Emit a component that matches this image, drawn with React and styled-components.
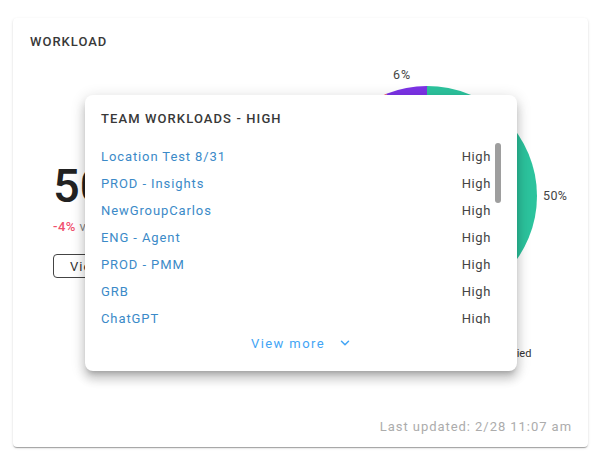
import React from "react";
import styled, { createGlobalStyle } from "styled-components";

const GlobalStyle = createGlobalStyle`
  html, body {
    margin: 0;
    padding: 0;
    background: #ffffff;
  }
  body {
    font-family: Roboto, "Liberation Sans", Arial, sans-serif;
    color: #333;
  }
`;

const Page = styled.div`
  padding: 18px 14px 20px 13px;
`;

const Card = styled.section`
  position: relative;
  box-sizing: border-box;
  width: 575px;
  height: 429px;
  padding: 16px 16px 12px 17px;
  background: #fff;
  border-radius: 4px;
  box-shadow: 0px 2px 1px -1px rgba(0, 0, 0, 0.2),
    0px 1px 1px 0px rgba(0, 0, 0, 0.14), 0px 1px 3px 0px rgba(0, 0, 0, 0.12);
  display: flex;
  flex-direction: column;
`;

const Title = styled.h2`
  margin: 0;
  font-size: 13px;
  line-height: 16px;
  font-weight: 500;
  letter-spacing: 1px;
  color: #383838;
`;

const Main = styled.div`
  display: flex;
  margin-top: 12px;
`;

const StatColumn = styled.div`
  width: 270px;
  padding: 97px 0 0 23px;
  box-sizing: border-box;
  display: flex;
  flex-direction: column;
  align-items: flex-start;
`;

const BigNumber = styled.div`
  font-size: 47px;
  line-height: 54px;
  font-weight: 500;
  color: #222;
`;

const Delta = styled.div`
  margin-top: 6px;
  font-size: 13px;
  line-height: 16px;
  color: #888;
  letter-spacing: 0.5px;

  strong {
    color: #f0506e;
    font-weight: 500;
  }
`;

const OutlineButton = styled.button`
  margin-top: 19px;
  height: 24px;
  padding: 0 16px;
  font-family: inherit;
  font-size: 13px;
  letter-spacing: 1px;
  color: #333;
  background: #fff;
  border: 1px solid #444;
  border-radius: 4px;
`;

const ChartColumn = styled.div`
  flex: 1;
  display: flex;
  flex-direction: column;
  align-items: flex-start;
`;

const Legend = styled.div`
  display: flex;
  gap: 10px;
  margin: 6px 0 0 51px;
  font-size: 11px;
  line-height: 12px;
  color: #333;
`;

const LegendItem = styled.span`
  display: inline-flex;
  align-items: center;
  gap: 4px;

  &::before {
    content: "";
    width: 8px;
    height: 8px;
    border-radius: 50%;
    background: ${({ color }) => color};
  }
`;

const Footer = styled.div`
  margin-top: auto;
  text-align: right;
  font-size: 13px;
  line-height: 16px;
  letter-spacing: 0.95px;
  color: #acacac;
`;

const Popover = styled.div`
  position: absolute;
  left: 72px;
  top: 77px;
  width: 432px;
  height: 276px;
  box-sizing: border-box;
  padding: 16px 16px 17px 16px;
  background: #fff;
  border-radius: 8px;
  box-shadow: 0px 5px 5px -3px rgba(0, 0, 0, 0.2),
    0px 8px 10px 1px rgba(0, 0, 0, 0.14), 0px 3px 14px 2px rgba(0, 0, 0, 0.12);
  display: flex;
  flex-direction: column;
`;

const PopTitle = styled.h3`
  margin: 0;
  font-size: 13px;
  line-height: 16px;
  font-weight: 500;
  letter-spacing: 1.1px;
  color: #383838;
`;

const ListFrame = styled.div`
  position: relative;
  margin-top: 16px;
  height: 181px;
  overflow: hidden;
`;

const List = styled.ul`
  list-style: none;
  margin: 0;
  padding: 0;
`;

const ScrollThumb = styled.div`
  position: absolute;
  top: 0;
  right: 0;
  width: 6px;
  height: 60px;
  border-radius: 3px;
  background: #9e9e9e;
`;

const Row = styled.li`
  display: flex;
  justify-content: space-between;
  align-items: center;
  height: 27px;
  padding-right: 10px;
  font-size: 13px;
`;

const TeamLink = styled.a`
  color: #3b8ac8;
  text-decoration: none;
  letter-spacing: 0.9px;
`;

const Level = styled.span`
  color: #444;
  letter-spacing: 0.6px;
`;

const ViewMore = styled.button`
  align-self: center;
  margin-top: 8px;
  height: 22px;
  display: inline-flex;
  align-items: center;
  gap: 14px;
  padding: 0;
  border: none;
  background: none;
  font-family: inherit;
  font-size: 13px;
  letter-spacing: 1.4px;
  color: #42a5f5;
`;

const teams = [
  "Location Test 8/31",
  "PROD - Insights",
  "NewGroupCarlos",
  "ENG - Agent",
  "PROD - PMM",
  "GRB",
  "ChatGPT",
  "Support - Tier 1",
  "Sales - EMEA",
  "ENG - Platform",
  "Marketing Ops",
  "PROD - Mobile",
  "Finance",
  "ENG - Data",
  "Customer Success",
  "Design",
  "Legal",
  "HR - Recruiting",
  "IT Helpdesk",
  "Partnerships",
];

const slices = [
  { value: 50, color: "#2cc39d" },
  { value: 44, color: "#f0506e" },
  { value: 6, color: "#7c33e6" },
];

const cx = 127;
const cy = 134;
const r = 110;

function arcPath(start, end) {
  const a0 = (start / 100) * 2 * Math.PI;
  const a1 = (end / 100) * 2 * Math.PI;
  const x0 = cx + r * Math.sin(a0);
  const y0 = cy - r * Math.cos(a0);
  const x1 = cx + r * Math.sin(a1);
  const y1 = cy - r * Math.cos(a1);
  const large = end - start > 50 ? 1 : 0;
  return `M${cx},${cy} L${x0},${y0} A${r},${r} 0 ${large} 1 ${x1},${y1} Z`;
}

const PieChart = () => {
  let acc = 0;
  return (
    <svg width="272" height="280" viewBox="0 0 272 280">
      {slices.map((s, i) => {
        const d = arcPath(acc, acc + s.value);
        acc += s.value;
        return <path key={i} d={d} fill={s.color} />;
      })}
      <text x="102" y="17" textAnchor="middle" fontSize="12.5" letterSpacing="0.8" fill="#444" fontFamily="Roboto, sans-serif">
        6%
      </text>
      <text x="243" y="138" fontSize="12.5" letterSpacing="0.4" fill="#444" fontFamily="Roboto, sans-serif">
        50%
      </text>
    </svg>
  );
};

const Chevron = () => (
  <svg width="12" height="12" viewBox="0 0 24 24">
    <path d="M5 8.5l7 7 7-7" fill="none" stroke="#42a5f5" strokeWidth="3" strokeLinecap="round" strokeLinejoin="round" />
  </svg>
);

export default function App() {
  return (
    <>
      <GlobalStyle />
      <Page>
        <Card>
          <Title>WORKLOAD</Title>
          <Main>
            <StatColumn>
              <BigNumber>50</BigNumber>
              <Delta>
                <strong>-4%</strong> vs last week
              </Delta>
              <OutlineButton>View details</OutlineButton>
            </StatColumn>
            <ChartColumn>
              <PieChart />
              <Legend>
                <LegendItem color="#f0506e">Overloaded</LegendItem>
                <LegendItem color="#7c33e6">High</LegendItem>
                <LegendItem color="#2cc39d">Occupied</LegendItem>
              </Legend>
            </ChartColumn>
          </Main>
          <Footer>Last updated: 2/28 11:07 am</Footer>
          <Popover>
            <PopTitle>TEAM WORKLOADS - HIGH</PopTitle>
            <ListFrame>
              <List>
                {teams.map((t) => (
                  <Row key={t}>
                    <TeamLink href="#">{t}</TeamLink>
                    <Level>High</Level>
                  </Row>
                ))}
              </List>
              <ScrollThumb />
            </ListFrame>
            <ViewMore>
              View more
              <Chevron />
            </ViewMore>
          </Popover>
        </Card>
      </Page>
    </>
  );
}
